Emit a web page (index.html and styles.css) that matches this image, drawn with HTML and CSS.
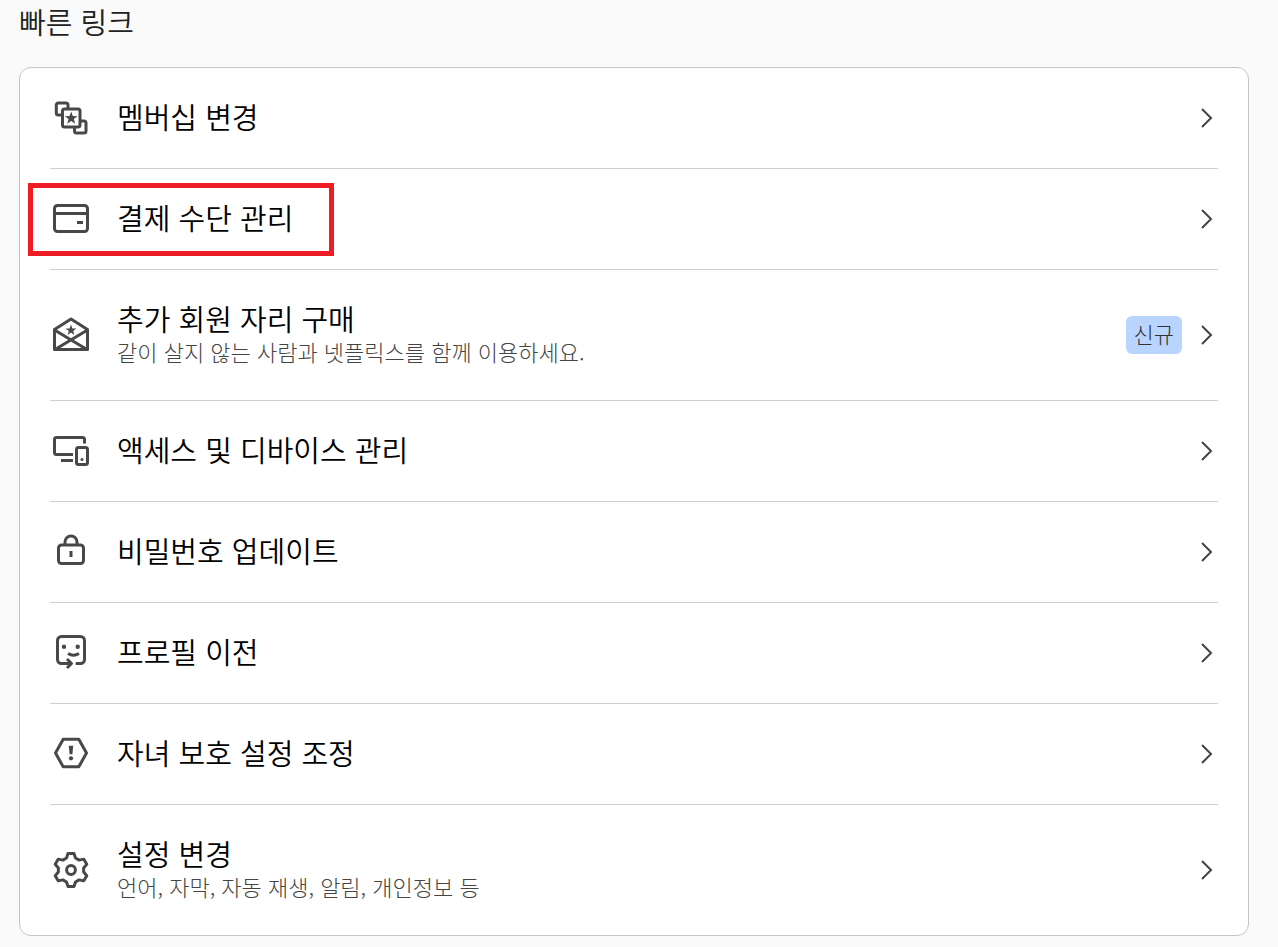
FILE: index.html
```html
<!DOCTYPE html>
<html lang="ko">
<head>
  <meta charset="UTF-8">
  <meta name="viewport" content="width=device-width, initial-scale=1.0">
  <title>빠른 링크</title>
  <link rel="stylesheet" href="styles.css">
</head>
<body>
  <main class="quick-links">
    <h2 class="section-title">빠른 링크</h2>
    <ul class="card">
      <li class="card-item">
        <a class="row" href="#">
          <svg class="icon" viewBox="0 0 36 36" aria-hidden="true">
            <path d="M9 15H5.3a2 2 0 0 1-2-2V5a2 2 0 0 1 2-2H13a2 2 0 0 1 2 2v4"/>
            <rect x="9.5" y="9" width="17.5" height="18" rx="2"/>
            <path d="M27 21h4a2 2 0 0 1 2 2v8a2 2 0 0 1-2 2h-7.5a2 2 0 0 1-2-2v-4"/>
            <path class="solid" d="M18.200 11.500l1.600 4.600 4.800.1-3.800 2.900 1.400 4.600-4-2.800-4 2.800 1.400-4.600-3.800-2.900 4.800-.1z"/>
          </svg>
          <span class="row-text"><span class="row-title">멤버십 변경</span></span>
          <svg class="chevron" viewBox="0 0 24 24" aria-hidden="true"><path d="M8 3l9 9-9 9"/></svg>
        </a>
      </li>
      <li class="card-item">
        <a class="row row-marked" href="#">
          <svg class="icon" viewBox="0 0 36 36" aria-hidden="true">
            <rect x="1.5" y="4.500" width="33" height="26" rx="3"/>
            <path d="M1.5 12.500h33"/>
            <path class="solid" d="M24 20h6v3h-6z"/>
          </svg>
          <span class="row-text"><span class="row-title">결제 수단 관리</span></span>
          <svg class="chevron" viewBox="0 0 24 24" aria-hidden="true"><path d="M8 3l9 9-9 9"/></svg>
        </a>
      </li>
      <li class="card-item">
        <a class="row" href="#">
          <svg class="icon" viewBox="0 0 36 36" aria-hidden="true">
            <path d="M1.5 12.5 18 2l16.5 10.5v20h-33z"/>
            <path d="M1.5 13 34 32.5M34.5 13 2 32.5"/>
            <path class="solid" d="M18 7.500l1.400 3.900 4 .1-3.200 2.500 1.100 3.900-3.300-2.300-3.300 2.300 1.100-3.900-3.200-2.500 4-.1z"/>
          </svg>
          <span class="row-text">
            <span class="row-title">추가 회원 자리 구매</span>
            <span class="row-sub">같이 살지 않는 사람과 넷플릭스를 함께 이용하세요.</span>
          </span>
          <span class="badge">신규</span>
          <svg class="chevron" viewBox="0 0 24 24" aria-hidden="true"><path d="M8 3l9 9-9 9"/></svg>
        </a>
      </li>
      <li class="card-item">
        <a class="row" href="#">
          <svg class="icon" viewBox="0 0 36 36" aria-hidden="true">
            <path d="M31.5 10.5v-4a2 2 0 0 0-2-2h-26a2 2 0 0 0-2 2v13a2 2 0 0 0 2 2H20"/>
            <path d="M8 27.5h12"/>
            <rect x="23.5" y="14.5" width="11" height="17" rx="2"/>
            <circle class="solid" cx="29" cy="26.5" r="1.5"/>
          </svg>
          <span class="row-text"><span class="row-title">액세스 및 디바이스 관리</span></span>
          <svg class="chevron" viewBox="0 0 24 24" aria-hidden="true"><path d="M8 3l9 9-9 9"/></svg>
        </a>
      </li>
      <li class="card-item">
        <a class="row" href="#">
          <svg class="icon" viewBox="0 0 36 36" aria-hidden="true">
            <rect x="5.5" y="11" width="25" height="18.500" rx="3"/>
            <path d="M12 11V8a6 6 0 0 1 12 0v3"/>
            <path d="M18 17v6"/>
          </svg>
          <span class="row-text"><span class="row-title">비밀번호 업데이트</span></span>
          <svg class="chevron" viewBox="0 0 24 24" aria-hidden="true"><path d="M8 3l9 9-9 9"/></svg>
        </a>
      </li>
      <li class="card-item">
        <a class="row" href="#">
          <svg class="icon" viewBox="0 0 36 36" aria-hidden="true">
            <path d="M22.7 28.500h4.800a4 4 0 0 0 4-4v-19a4 4 0 0 0-4-4h-19a4 4 0 0 0-4 4v19a4 4 0 0 0 4 4H18"/>
            <path d="M14 24l4.500 4.500L14 33"/>
            <circle class="solid" cx="11" cy="11.700" r="2.200"/>
            <circle class="solid" cx="24.700" cy="11.700" r="2.200"/>
            <path d="M15 18.500q5.500 3.500 11 0"/>
          </svg>
          <span class="row-text"><span class="row-title">프로필 이전</span></span>
          <svg class="chevron" viewBox="0 0 24 24" aria-hidden="true"><path d="M8 3l9 9-9 9"/></svg>
        </a>
      </li>
      <li class="card-item">
        <a class="row" href="#">
          <svg class="icon" viewBox="0 0 36 36" aria-hidden="true">
            <path d="M10.2 3.200h15.600L33.500 17l-7.700 13.800H10.200L2.500 17z"/>
            <path class="solid" d="M15.800 9.700h4.400l-.8 8.500h-2.800z"/>
            <circle class="solid" cx="18" cy="22.300" r="2.100"/>
          </svg>
          <span class="row-text"><span class="row-title">자녀 보호 설정 조정</span></span>
          <svg class="chevron" viewBox="0 0 24 24" aria-hidden="true"><path d="M8 3l9 9-9 9"/></svg>
        </a>
      </li>
      <li class="card-item">
        <a class="row" href="#">
          <svg class="icon" viewBox="0 0 36 36" aria-hidden="true">
            <path d="M13.5 6 15 1.500h6L22.500 6l3.640 2.100 4.660-.95 3 5.200-3.160 3.550v4.200l3.160 3.550-3 5.200-4.660-.95L22.500 30 21 34.500h-6L13.500 30l-3.640-2.100-4.660.95-3-5.200 3.160-3.550v-4.200L2.200 12.350l3-5.200 4.660.95z"/>
            <circle cx="18" cy="18" r="4.400"/>
          </svg>
          <span class="row-text">
            <span class="row-title">설정 변경</span>
            <span class="row-sub">언어, 자막, 자동 재생, 알림, 개인정보 등</span>
          </span>
          <svg class="chevron" viewBox="0 0 24 24" aria-hidden="true"><path d="M8 3l9 9-9 9"/></svg>
        </a>
      </li>
    </ul>
  </main>
</body>
</html>
```
FILE: styles.css
```css
* { box-sizing: border-box; }
body { margin: 0; background: #fafafa; color: #000; font-family: "Noto Sans CJK KR", sans-serif; }
.quick-links { padding: 3px 29px 11px 19px; }
.section-title { margin: 0 0 28px; font-size: 29px; line-height: 36px; font-weight: 350; color: #222; }

.card { list-style: none; margin: 0; padding: 0 30px; background: #fff; border: 1px solid #c4c4c4; border-radius: 12px; }
.card-item { border-bottom: 1px solid #cfcfcf; }
.card-item:last-child { border-bottom: none; }

.row { position: relative; display: flex; align-items: center; gap: 12px; padding: 30px 0; color: inherit; text-decoration: none; }
.row-text { flex: 1; display: flex; flex-direction: column; padding-bottom: 4px; }
.row-title { font-size: 29px; line-height: 36px; font-weight: 350; }
.row-sub { font-size: 22px; line-height: 30px; font-weight: 300; color: #444; }

.icon { width: 36px; height: 36px; margin: 0 16px 0 3px; flex: none; fill: none; stroke: #484848; stroke-width: 3; stroke-linejoin: round; }
.icon .solid { fill: #484848; stroke: none; }
.chevron { width: 24px; height: 24px; flex: none; fill: none; stroke: #444; stroke-width: 2; }
.badge { padding: 0 8px 4px; background: #b9d5ff; border-radius: 6px; font-size: 22px; line-height: 34px; font-weight: 300; color: #333; }

/* red frame around the payment link */
.row-marked::before { content: ""; position: absolute; left: -22px; top: 14px; width: 296px; height: 63px; border: 5px solid #ee1c25; }
```
